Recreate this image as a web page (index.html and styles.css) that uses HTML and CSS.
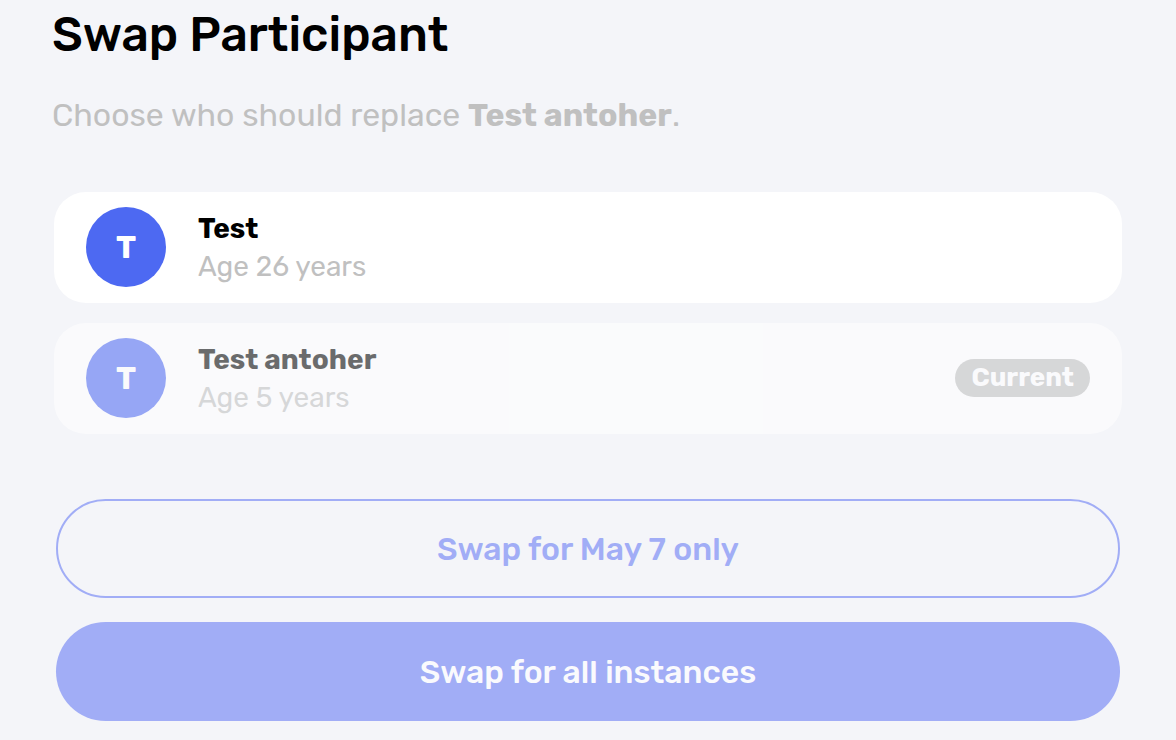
FILE: index.html
```html
<!DOCTYPE html>
<html lang="en">
  <head>
    <meta charset="UTF-8" />
    <meta name="viewport" content="width=device-width, initial-scale=1.0" />
    <title>Swap Participant</title>
    <link rel="stylesheet" href="styles.css">
  </head>
  <body>
    <main class="swap">
      <h1 class="title">Swap Participant</h1>
      <p class="subtitle">Choose who should replace <strong>Test antoher</strong>.</p>

      <!-- Participants -->
      <div class="participants">
        <button type="button" class="participant">
          <span class="avatar">T</span>
          <span class="info">
            <span class="name">Test</span>
            <span class="age">Age 26 years</span>
          </span>
        </button>
        <button type="button" class="participant current" disabled>
          <span class="avatar">T</span>
          <span class="info">
            <span class="name">Test antoher</span>
            <span class="age">Age 5 years</span>
          </span>
          <span class="badge">Current</span>
        </button>
      </div>

      <!-- Actions -->
      <div class="actions">
        <button type="button" class="btn btn-outline" disabled>Swap for May 7 only</button>
        <button type="button" class="btn btn-filled" disabled>Swap for all instances</button>
      </div>
    </main>
  </body>
</html>
```

FILE: styles.css
```css
* {
  box-sizing: border-box;
}

body {
  margin: 0;
  font-family: Rubik, Roboto, sans-serif;
  background: #f4f5f9;
  color: #000;
}

button {
  font-family: inherit;
  border: none;
}

.swap {
  padding: 4px 52px 16px;
}

.title {
  margin: 0;
  font-size: 48px;
  line-height: 62px;
  font-weight: 500;
}

.subtitle {
  margin: 29px 0 57px;
  font-size: 32px;
  line-height: 40px;
  color: #c0c0c0;
}

/* Participants */
.participants {
  display: flex;
  flex-direction: column;
  gap: 20px;
  margin: 0 2px;
}

.participant {
  display: flex;
  align-items: center;
  gap: 32px;
  width: 100%;
  padding: 15px 32px 16px;
  border-radius: 32px;
  background: #fff;
  color: #000;
  text-align: left;
  cursor: pointer;
}

.participant.current {
  opacity: 0.56;
  cursor: default;
}

.avatar {
  display: flex;
  align-items: center;
  justify-content: center;
  width: 80px;
  height: 80px;
  border-radius: 50%;
  background: #4d69f2;
  color: #fff;
  font-size: 32px;
  font-weight: 700;
}

.info {
  display: flex;
  flex-direction: column;
  flex: 1;
  padding-top: 2px;
  font-size: 28px;
  line-height: 38px;
}

.name {
  font-weight: 700;
}

.age {
  color: #c0c0c0;
}

.badge {
  padding: 0 16px;
  border-radius: 19px;
  background: #c0c0c0;
  color: #fff;
  font-size: 26px;
  line-height: 38px;
  font-weight: 700;
}

/* Actions */
.actions {
  display: flex;
  flex-direction: column;
  gap: 24px;
  margin: 65px 4px 0;
}

.btn {
  min-height: 99px;
  border-radius: 50px;
  font-size: 32px;
  font-weight: 500;
}

.btn-outline {
  border: 2px solid #a1adf6;
  background: transparent;
  color: #a1adf6;
}

.btn-filled {
  background: #a1adf6;
  color: #fafafd;
}
```
